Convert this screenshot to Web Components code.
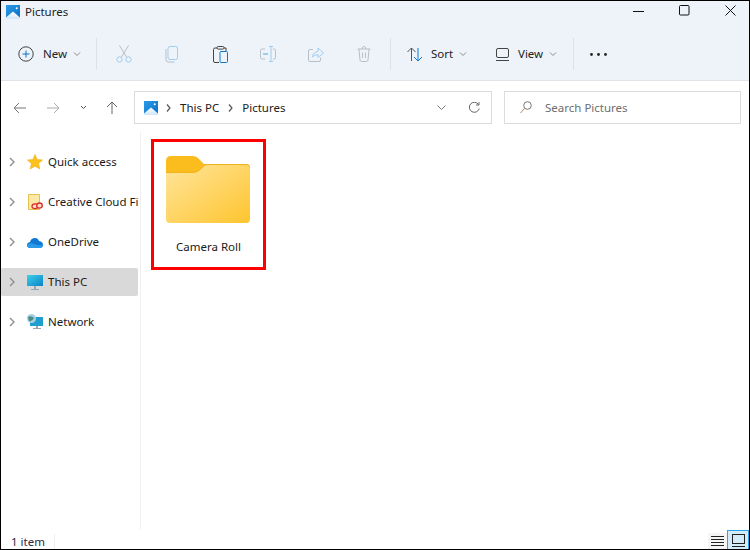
<!DOCTYPE html>
<html>
<head>
<meta charset="utf-8">
<title>Pictures</title>
<style>
  html, body { margin: 0; padding: 0; background: #fff; }
  body { font-family: "Noto Sans", "Open Sans", sans-serif; font-size: 11.5px; color: #1a1a1a; }
</style>
</head>
<body>
<explorer-window></explorer-window>
<script>
// Pictures app icon, used in the title bar and the address bar
const picturesIcon = (size) => `
  <svg width="${size}" height="${size}" viewBox="0 0 14 14">
    <defs>
      <linearGradient id="sky" x1="0" y1="0" x2="1" y2="1"><stop offset="0" stop-color="#2a9be8"/><stop offset="1" stop-color="#0a6fc4"/></linearGradient>
      <linearGradient id="hill" x1="0" y1="0" x2="0" y2="1"><stop offset="0" stop-color="#fff"/><stop offset="1" stop-color="#cfe6f7"/></linearGradient>
    </defs>
    <rect width="14" height="14" fill="url(#sky)"/>
    <path d="M0 14 V12.5 L7 6.5 L14 12.5 V14 Z" fill="url(#hill)"/>
    <circle cx="10.7" cy="3.2" r="1" fill="#fff"/>
  </svg>`;

const chevronDown = `<svg width="8" height="8" viewBox="0 0 8 8"><path d="M1 2.5 L4 5.5 L7 2.5" fill="none" stroke="#8a8a8a"/></svg>`;

class TitleBar extends HTMLElement {
  constructor() {
    super();
    this.attachShadow({ mode: 'open' }).innerHTML = `
      <style>
        :host { display: flex; align-items: center; height: 21px; padding: 0 0 4px 5px; }
        .icon { display: flex; margin-right: 5px; }
        .title { flex: 1; color: #222; }
        .controls { display: flex; gap: 9px; align-self: flex-start; }
        .controls span { width: 37px; height: 19px; display: flex; align-items: center; justify-content: center; }
      </style>
      <span class="icon">${picturesIcon(14)}</span>
      <span class="title"><slot></slot></span>
      <div class="controls">
        <span><svg width="11" height="11" viewBox="0 0 11 11"><path d="M0 6.5 H11" stroke="#111"/></svg></span>
        <span><svg width="11" height="11" viewBox="0 0 11 11"><rect x=".5" y=".5" width="9.5" height="9.5" rx="1" fill="none" stroke="#111"/></svg></span>
        <span><svg width="11" height="11" viewBox="0 0 11 11"><path d="M.5 .5 L10.5 10.5 M10.5 .5 L.5 10.5" stroke="#111"/></svg></span>
      </div>`;
  }
}
customElements.define('title-bar', TitleBar);

class CommandBar extends HTMLElement {
  constructor() {
    super();
    const off = '#b9bfc6', blue = '#9fcdf0', dark = '#444';
    this.attachShadow({ mode: 'open' }).innerHTML = `
      <style>
        :host { display: flex; align-items: center; height: 52px; background: #eef3fa; border-bottom: 1px solid #dfe3e8; padding: 2px 0 0 17px; }
        .btn { display: flex; align-items: center; color: #222; }
        .btn svg { display: block; }
        .label { margin: 0 6px 0 9px; position: relative; top: -.5px; }
        .sep { width: 1px; height: 32px; background: #dde2e8; }
        .tool { width: 48px; display: flex; justify-content: center; }
      </style>
      <div class="btn" style="width:78px">
        <svg width="16" height="16" viewBox="0 0 16 16"><circle cx="8" cy="8" r="7.2" fill="none" stroke="#444"/><path d="M8 4.5 V11.5 M4.5 8 H11.5" stroke="#0a70c4"/></svg>
        <span class="label">New</span>${chevronDown}
      </div>
      <div class="sep"></div>
      <div style="width:3px"></div>
      <div class="tool"><svg width="16" height="18" viewBox="0 0 16 18"><path d="M3.5 .5 L10.5 12 M12.5 .5 L5.5 12" fill="none" stroke="${off}"/><circle cx="3.5" cy="14.5" r="2.7" fill="none" stroke="${blue}"/><circle cx="12.5" cy="14.5" r="2.7" fill="none" stroke="${blue}"/></svg></div>
      <div class="tool"><svg width="14" height="17" viewBox="0 0 14 17"><rect x="3" y=".5" width="9.5" height="13" rx="2" fill="none" stroke="${blue}"/><path d="M1 3 V13.5 Q1 16 3.5 16 H9.5" fill="none" stroke="${off}"/></svg></div>
      <div class="tool"><svg width="15" height="17" viewBox="0 0 15 17"><path d="M4 2 H2 Q.5 2 .5 3.5 V15 Q.5 16.5 2 16.5 H6" fill="none" stroke="${dark}"/><path d="M11 2 H13 V5" fill="none" stroke="${dark}"/><rect x="4" y=".5" width="7" height="2.6" rx="1.2" fill="none" stroke="${dark}"/><rect x="7" y="5.5" width="7.5" height="11" rx="1" fill="none" stroke="#0a78d0"/></svg></div>
      <div class="tool"><svg width="16" height="16" viewBox="0 0 16 16"><path d="M5 3 H2 Q.5 3 .5 4.5 V11.5 Q.5 13 2 13 H5 M13 3 H14 Q15.5 3 15.5 4.5 V11.5 Q15.5 13 14 13 H13" fill="none" stroke="${off}"/><path d="M3 8 H8" stroke="${blue}" stroke-width="2"/><path d="M9 .5 H13 M11 .5 V15.5 M9 15.5 H13" fill="none" stroke="${blue}"/></svg></div>
      <div class="tool"><svg width="16" height="16" viewBox="0 0 16 16"><path d="M5 3.5 H2 Q.5 3.5 .5 5 V14 Q.5 15.5 2 15.5 H11 Q12.5 15.5 12.5 14 V11.5" fill="none" stroke="${off}"/><path d="M4.5 11 Q5 6 10 5.5 V2 L15.5 7 L10 11.5 V8.5 Q6.5 8.5 4.5 11 Z" fill="none" stroke="${blue}"/></svg></div>
      <div class="tool"><svg width="14" height="16" viewBox="0 0 14 16"><path d="M.5 3 H13.5 M5 3 Q5 .5 7 .5 Q9 .5 9 3 M2 3 L3 14 Q3.2 15.5 4.5 15.5 H9.5 Q10.8 15.5 11 14 L12 3 M5.5 6.5 V12 M8.5 6.5 V12" fill="none" stroke="${off}"/></svg></div>
      <div style="width:2px"></div>
      <div class="sep"></div>
      <div class="btn" style="width:105px;padding-left:16px;box-sizing:border-box">
        <svg width="16" height="15" viewBox="0 0 16 15"><path d="M4.5 14 V1 M.5 5 L4.5 1 L8.5 5" fill="none" stroke="#555"/><path d="M11 1 V14 M7 10 L11 14 L15 10" fill="none" stroke="#0a78d0"/></svg>
        <span class="label" style="margin-left:8px">Sort</span>${chevronDown}
      </div>
      <div class="btn" style="width:77px">
        <svg width="13" height="15" viewBox="0 0 13 15"><rect x=".5" y="1.5" width="12" height="9" rx="1.5" fill="none" stroke="#444"/><path d="M0 13.5 H13" stroke="#444"/></svg>
        <span class="label" style="margin-left:9px">View</span>${chevronDown}
      </div>
      <div class="sep"></div>
      <div class="btn" style="padding-left:16px"><svg width="17" height="3" viewBox="0 0 17 3"><circle cx="1.5" cy="1.5" r="1.4" fill="#222"/><circle cx="8.5" cy="1.5" r="1.4" fill="#222"/><circle cx="15.5" cy="1.5" r="1.4" fill="#222"/></svg></div>`;
  }
}
customElements.define('command-bar', CommandBar);

class NavBar extends HTMLElement {
  constructor() {
    super();
    const sep = `<svg width="5" height="8" viewBox="0 0 5 8"><path d="M1 .5 L4 4 L1 7.5" fill="none" stroke="#555" stroke-width="1.2"/></svg>`;
    this.attachShadow({ mode: 'open' }).innerHTML = `
      <style>
        :host { display: flex; align-items: center; height: 51px; padding: 2px 8px 0 11px; box-sizing: border-box; }
        .arrows { display: flex; align-items: center; width: 122px; flex: none; }
        .arrows span { display: flex; justify-content: center; }
        .box { height: 33px; box-sizing: border-box; border: 1px solid #dcdcdc; background: #fff; display: flex; align-items: center; }
        .address { width: 358px; flex: none; margin-right: 12px; padding: 0 9px; }
        .crumbs { flex: 1; display: flex; align-items: center; gap: 9px; color: #222; }
        .crumbs svg:first-child { margin-right: -1px; }
        .search { flex: 1; padding-left: 15px; color: #6e6e6e; }
        .search svg { margin-right: 13px; }
      </style>
      <div class="arrows">
        <span style="width:14px"><svg width="13" height="12" viewBox="0 0 13 12"><path d="M13 6 H1 M6 1 L1 6 L6 11" fill="none" stroke="#777"/></svg></span>
        <span style="width:20px"></span>
        <span style="width:14px"><svg width="13" height="12" viewBox="0 0 13 12"><path d="M0 6 H12 M7 1 L12 6 L7 11" fill="none" stroke="#aaa"/></svg></span>
        <span style="width:16px"></span>
        <span style="width:14px"><svg width="7" height="5" viewBox="0 0 7 5"><path d="M1 1 L3.5 3.5 L6 1" fill="none" stroke="#555"/></svg></span>
        <span style="width:15px"></span>
        <span style="width:14px"><svg width="12" height="13" viewBox="0 0 12 13"><path d="M6 13 V1 M1 6 L6 1 L11 6" fill="none" stroke="#666"/></svg></span>
      </div>
      <div class="box address">
        <div class="crumbs">${picturesIcon(14)}${sep}<span>This PC</span>${sep}<span>Pictures</span></div>
        <svg style="margin-right:22px" width="9" height="6" viewBox="0 0 9 6"><path d="M.5 .5 L4.5 4.5 L8.5 .5" fill="none" stroke="#777"/></svg>
        <svg style="margin-right:2px" width="12" height="12" viewBox="0 0 12 12"><path d="M10.5 2.5 A5 5 0 1 0 11.2 6.5 M11 .2 V3 H8" fill="none" stroke="#666"/></svg>
      </div>
      <div class="box search">
        <svg width="12" height="13" viewBox="0 0 12 13"><circle cx="7.5" cy="4.5" r="3.8" fill="none" stroke="#777"/><path d="M4.7 7.2 L.5 12" stroke="#b58a6a"/></svg>
        <span>Search Pictures</span>
      </div>`;
  }
}
customElements.define('nav-bar', NavBar);

class SideItem extends HTMLElement {
  constructor() {
    super();
    this.attachShadow({ mode: 'open' }).innerHTML = `
      <style>
        :host { display: flex; align-items: center; height: 28px; margin-bottom: 12px; margin-right: 2px; padding-left: 8px; border-radius: 2px; white-space: nowrap; }
        :host([selected]) { background: #d9d9d9; }
        .chev { display: flex; width: 18px; flex: none; }
        .icon { display: flex; width: 16px; height: 16px; flex: none; margin-right: 5px; justify-content: center; align-items: center; }
        .label { position: relative; top: -1px; }
      </style>
      <span class="chev"><svg width="6" height="10" viewBox="0 0 6 10"><path d="M1 1 L5 5 L1 9" fill="none" stroke="#8f8f8f" stroke-width="1.4"/></svg></span>
      <span class="icon"><slot name="icon"></slot></span>
      <span class="label"><slot></slot></span>`;
  }
}
customElements.define('side-item', SideItem);

class SideNav extends HTMLElement {
  constructor() {
    super();
    this.attachShadow({ mode: 'open' }).innerHTML = `
      <style>
        :host { display: block; width: 139px; flex: none; padding-top: 16px; }
      </style>
      <slot></slot>`;
  }
}
customElements.define('side-nav', SideNav);

class FolderTile extends HTMLElement {
  constructor() {
    super();
    this.attachShadow({ mode: 'open' }).innerHTML = `
      <style>
        :host { display: flex; flex-direction: column; align-items: center; width: 109px; height: 125px; border: 3px solid #f00; }
        svg { margin: 14px 2px 0 0; display: block; }
        .name { margin-top: 16px; color: #1a1a1a; }
      </style>
      <svg width="84" height="67" viewBox="0 0 84 67">
        <defs>
          <linearGradient id="body" x1="0" y1="0" x2="1" y2="1">
            <stop offset="0" stop-color="#ffe49a"/>
            <stop offset="1" stop-color="#fec52f"/>
          </linearGradient>
        </defs>
        <path d="M0 5 Q0 0 5 0 H27 Q30 0 32 2 L38 8 H80 Q84 8 84 12 V30 H0 Z" fill="#fbbd1e"/>
        <path d="M0 17 H27 Q31 17 34 14 L38 10 Q39 9 41 9 H80 Q84 9 84 13 V63 Q84 67 80 67 H4 Q0 67 0 63 Z" fill="url(#body)"/>
        <path d="M0 16 H27 Q31 16 34 13 L38 9 Q39 8 41 8 H80 Q84 8 84 12 V13 Q84 9 80 9 H41 Q39 9 38 10 L34 14 Q31 17 27 17 H0 Z" fill="#f0b31e"/>
      </svg>
      <span class="name"><slot></slot></span>`;
  }
}
customElements.define('folder-tile', FolderTile);

class StatusBar extends HTMLElement {
  constructor() {
    super();
    this.attachShadow({ mode: 'open' }).innerHTML = `
      <style>
        :host { display: flex; align-items: flex-end; height: 19px; padding-left: 10px; color: #2a2a4a; }
        .count { width: 43px; border-right: 1px solid #eee; height: 15px; line-height: 15px; margin-right: auto; }
        .view { width: 19px; height: 16px; display: flex; align-items: center; justify-content: center; box-sizing: border-box; background: #f5f5f5; }
        .on { width: 22px; height: 19px; background: #d4ebf9; border: 1px solid #2aa4e8; border-bottom: 0; }
      </style>
      <div class="count"><slot></slot></div>
      <div class="view"><svg width="13" height="11" viewBox="0 0 13 11"><path d="M0 .5 H13 M0 3.5 H13 M0 6.5 H13 M0 9.5 H13" stroke="#222"/></svg></div>
      <div class="view on"><svg width="13" height="13" viewBox="0 0 13 13"><rect x=".5" y=".5" width="12" height="9" fill="none" stroke="#222"/><path d="M0 12.5 H13" stroke="#222"/></svg></div>`;
  }
}
customElements.define('status-bar', StatusBar);

class ExplorerWindow extends HTMLElement {
  constructor() {
    super();
    this.attachShadow({ mode: 'open' }).innerHTML = `
      <style>
        :host { display: flex; flex-direction: column; width: 750px; height: 550px; box-sizing: border-box; border: 1px solid #000; background: #fff; overflow: hidden; }
        .top { background: #eef3fa; }
        .main { display: flex; flex: 1; min-height: 0; }
        .pane { flex: 1; border-left: 1px solid #f0f0f0; padding: 7px 0 0 10px; }
      </style>
      <div class="top">
        <title-bar>Pictures</title-bar>
        <command-bar></command-bar>
      </div>
      <nav-bar></nav-bar>
      <div class="main">
        <side-nav>
          <side-item>
            <svg slot="icon" width="16" height="16" viewBox="0 0 16 16"><path d="M8 .5 L10.2 5.4 L15.6 6 L11.6 9.6 L12.8 15 L8 12.2 L3.2 15 L4.4 9.6 L.4 6 L5.8 5.4 Z" fill="#fcc21b" stroke="#e8a80f" stroke-width=".5"/></svg>
            Quick access
          </side-item>
          <side-item>
            <svg slot="icon" width="16" height="16" viewBox="0 0 16 16"><path d="M1.5 .5 H12.5 V15.5 H1.5 Z" fill="#fde9a6" stroke="#e8c04f"/><ellipse cx="8" cy="12.2" rx="3" ry="2.4" fill="#fbd9c8" stroke="#d9302a" stroke-width="1.3"/><ellipse cx="12.5" cy="11.6" rx="2.8" ry="2.6" fill="#fbd9c8" stroke="#d9302a" stroke-width="1.3"/></svg>
            Creative Cloud Fi
          </side-item>
          <side-item>
            <svg slot="icon" width="16" height="11" viewBox="0 0 16 11"><path d="M3 11 Q0 10.5 0 8 Q0 5.5 3 5 Q4 1 8 1 Q11 1 12 4 Q16 4.5 16 8 Q16 10.5 13.5 11 Z" fill="#0f78d4"/><path d="M0 8 Q3 5 7 7 Q12 9 16 8 Q16 10.5 13.5 11 H3 Q0 10.5 0 8 Z" fill="#2a9ae8"/></svg>
            OneDrive
          </side-item>
          <side-item selected>
            <svg slot="icon" width="16" height="15" viewBox="0 0 16 15"><defs><linearGradient id="pc" x1="0" y1="0" x2="1" y2="1"><stop offset="0" stop-color="#3ad0e8"/><stop offset="1" stop-color="#0f82c8"/></linearGradient></defs><rect width="16" height="11" fill="url(#pc)"/><rect x="7" y="11" width="2" height="3" fill="#9aa5ad"/><rect x="4" y="14" width="8" height="1" fill="#9aa5ad"/></svg>
            This PC
          </side-item>
          <side-item>
            <svg slot="icon" width="16" height="16" viewBox="0 0 16 16"><rect x="3" y="3" width="13" height="9" fill="#1f9fd0"/><rect x="9" y="12" width="2" height="2" fill="#9aa5ad"/><rect x="6" y="14" width="8" height="1" fill="#9aa5ad"/><circle cx="4.5" cy="4.5" r="4.5" fill="#a9cfe4"/><path d="M1 3 Q4 1 7 4 Q5 8 2 7 Z" fill="#4a8f86"/></svg>
            Network
          </side-item>
        </side-nav>
        <div class="pane">
          <folder-tile>Camera Roll</folder-tile>
        </div>
      </div>
      <status-bar>1 item</status-bar>`;
  }
}
customElements.define('explorer-window', ExplorerWindow);
</script>
</body>
</html>
